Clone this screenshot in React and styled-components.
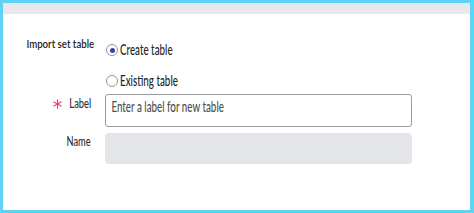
import React from "react";
import styled, { createGlobalStyle } from "styled-components";

const GlobalStyle = createGlobalStyle`
  html, body { margin: 0; padding: 0; background: #ffffff; }
  * { box-sizing: border-box; }
`;

const Frame = styled.div`
  width: 474px;
  height: 213px;
  border-style: solid;
  border-color: #5fd3f7;
  border-width: 3px 4px 3px 3px;
  background: #ffffff;
  font-family: Lato, "Open Sans", sans-serif;
  color: #2e2e2e;
  overflow: hidden;
`;

const TopStrip = styled.div`
  height: 11px;
  background: #e7e8eb;
`;

const Form = styled.div`
  display: grid;
  grid-template-columns: 88px 307px;
  column-gap: 14px;
  padding-top: 22px;
  align-items: start;
`;

const FieldLabel = styled.div`
  display: flex;
  justify-content: flex-end;
  align-items: center;
  gap: 0;
  font-size: ${(p) => p.$size || 12.5}px;
  font-weight: ${(p) => p.$weight || 500};
  line-height: 16px;
  padding-top: ${(p) => p.$top || 0}px;
  margin-top: ${(p) => p.$mt || 0}px;
  margin-right: ${(p) => p.$mr || 0}px;
  color: ${(p) => p.$color || "#2f2f2f"};
  white-space: nowrap;
`;

const Squeeze = styled.span`
  display: inline-block;
  white-space: nowrap;
  transform: scaleX(${(p) => p.$sx});
  transform-origin: ${(p) => p.$origin || "left"} center;
`;

const Field = styled.div`
  margin-top: ${(p) => p.$mt || 0}px;
`;

const RadioGroup = styled.div`
  display: flex;
  flex-direction: column;
  gap: 11px;
  padding-top: 4px;
`;

const RadioOption = styled.label`
  display: flex;
  align-items: center;
  gap: 2px;
  height: 20px;
  font-size: 14.5px;
  font-weight: 500;
  line-height: 20px;
  color: #262626;
  cursor: pointer;
`;

const RadioCircle = styled.span`
  width: 12px;
  height: 12px;
  margin-left: 1px;
  border-radius: 50%;
  border: 1px solid #949494;
  background: #ffffff;
  display: flex;
  align-items: center;
  justify-content: center;
  flex: none;
  &::after {
    content: "";
    width: 5px;
    height: 5px;
    border-radius: 50%;
    background: ${(p) => (p.$checked ? "#3d3f9c" : "transparent")};
  }
`;

const InputBox = styled.div`
  width: 307px;
  height: 33px;
  border: 1px solid #9b9b9b;
  border-radius: 3px;
  overflow: hidden;
  background: #ffffff;
`;

const TextInput = styled.input`
  display: block;
  width: 451px;
  height: 31px;
  border: none;
  outline: none;
  background: transparent;
  padding: 0 0 9px 8px;
  font-family: Lato, "Open Sans", sans-serif;
  font-size: 14.5px;
  font-weight: 500;
  color: #2b2b2b;
  transform: scaleX(0.676);
  transform-origin: left center;
  &::placeholder {
    color: #4f4f4f;
    opacity: 1;
  }
`;

const DisabledBox = styled.div`
  width: 307px;
  height: 31px;
  border-radius: 4px;
  background: #e4e5e8;
`;

const Asterisk = () => (
  <svg width="9" height="10" viewBox="0 0 9 10" aria-hidden="true">
    <g stroke="#e6406a" strokeWidth="1.1" strokeLinecap="round">
      <line x1="4.5" y1="0.8" x2="4.5" y2="9.2" />
      <line x1="0.9" y1="2.9" x2="8.1" y2="7.1" />
      <line x1="0.9" y1="7.1" x2="8.1" y2="2.9" />
    </g>
  </svg>
);

export default function App() {
  return (
    <>
      <GlobalStyle />
      <Frame>
        <TopStrip />
        <Form>
          <FieldLabel $size={12} $weight={600} $mr={-3} $color="#242424">
            <Squeeze $sx={0.805} $origin="right">Import set table</Squeeze>
          </FieldLabel>
          <RadioGroup role="radiogroup">
            <RadioOption>
              <RadioCircle $checked />
              <Squeeze $sx={0.676}>Create table</Squeeze>
            </RadioOption>
            <RadioOption>
              <RadioCircle />
              <Squeeze $sx={0.676}>Existing table</Squeeze>
            </RadioOption>
          </RadioGroup>

          <FieldLabel $mt={3} $top={2}>
            <Asterisk />
            <Squeeze $sx={0.75} $origin="right">Label</Squeeze>
          </FieldLabel>
          <Field $mt={3}>
            <InputBox>
              <TextInput placeholder="Enter a label for new table" />
            </InputBox>
          </Field>

          <FieldLabel $mt={6} $top={1}>
            <Squeeze $sx={0.74} $origin="right">Name</Squeeze>
          </FieldLabel>
          <Field $mt={6}>
            <DisabledBox />
          </Field>
        </Form>
      </Frame>
    </>
  );
}
